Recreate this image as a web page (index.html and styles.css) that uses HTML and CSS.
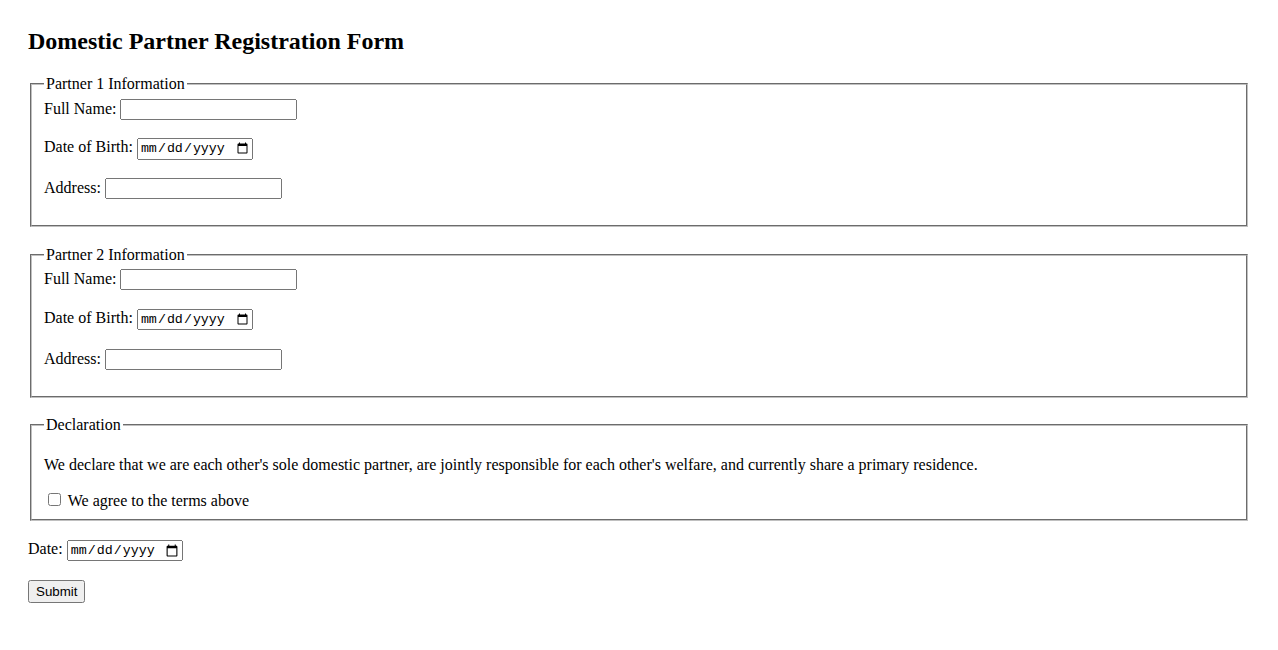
FILE: index.html
```html
<!DOCTYPE html>
<html>
<head>
<meta charset="utf-8">
<title>Domestic Partner Registration Form</title>
<link rel="stylesheet" href="styles.css">
</head>
<body>
<div class="page">
<h2 class="title">Domestic Partner Registration Form</h2>
<form class="form">
  <fieldset class="group">
    <legend>Partner 1 Information</legend>
    <div class="row"><label>Full Name: </label><input type="text" class="text"></div>
    <div class="row"><label>Date of Birth: </label><input type="date" class="date"></div>
    <div class="row"><label>Address: </label><input type="text" class="text"></div>
  </fieldset>
  <fieldset class="group">
    <legend>Partner 2 Information</legend>
    <div class="row"><label>Full Name: </label><input type="text" class="text"></div>
    <div class="row"><label>Date of Birth: </label><input type="date" class="date"></div>
    <div class="row"><label>Address: </label><input type="text" class="text"></div>
  </fieldset>
  <fieldset class="group group-last">
    <legend>Declaration</legend>
    <p class="decl">We declare that we are each other's sole domestic partner, are jointly responsible for each other's welfare, and currently share a primary residence.</p>
    <div class="check"><input type="checkbox" class="box"> <label>We agree to the terms above</label></div>
  </fieldset>
  <div class="row row-date"><label>Date: </label><input type="date" class="date"></div>
  <div class="row"><button type="button" class="submit">Submit</button></div>
</form>
</div>
</body>
</html>
```
FILE: styles.css
```css
body {
  margin: 8px;
  font-family: "Liberation Serif", "Times New Roman", serif;
  font-size: 16px;
  color: #000;
  background: #fff;
}
.page {
  padding: 20px;
}
.title {
  margin: 0 0 20px 0;
  font-size: 24px;
  font-weight: bold;
}
.group {
  margin: 0 2px 18.5px 2px;
  border: 2px groove #c0c0c0;
  padding: 0.35em 0.75em 0.625em;
}
.group-last {
  margin-bottom: 19px;
}
.row {
  margin-bottom: 18.6px;
}
.group .row:last-child {
  margin-bottom: 16px;
}
.row-date {
  margin-bottom: 18.5px;
}
.decl {
  margin: 16px 0 16px;
}
.check {
  margin: 0;
}
.group-last {
  padding-bottom: 9px;
}
.text {
  font-family: Arial, "Liberation Sans", sans-serif;
  box-sizing: border-box;
  width: 177px;
}
.date {
  font-family: "Liberation Mono", monospace;
  box-sizing: border-box;
  width: 116px;
}
.submit {
  font-family: Arial, "Liberation Sans", sans-serif;
  font-size: 13.33px;
  padding: 2px 6px;
}
```
